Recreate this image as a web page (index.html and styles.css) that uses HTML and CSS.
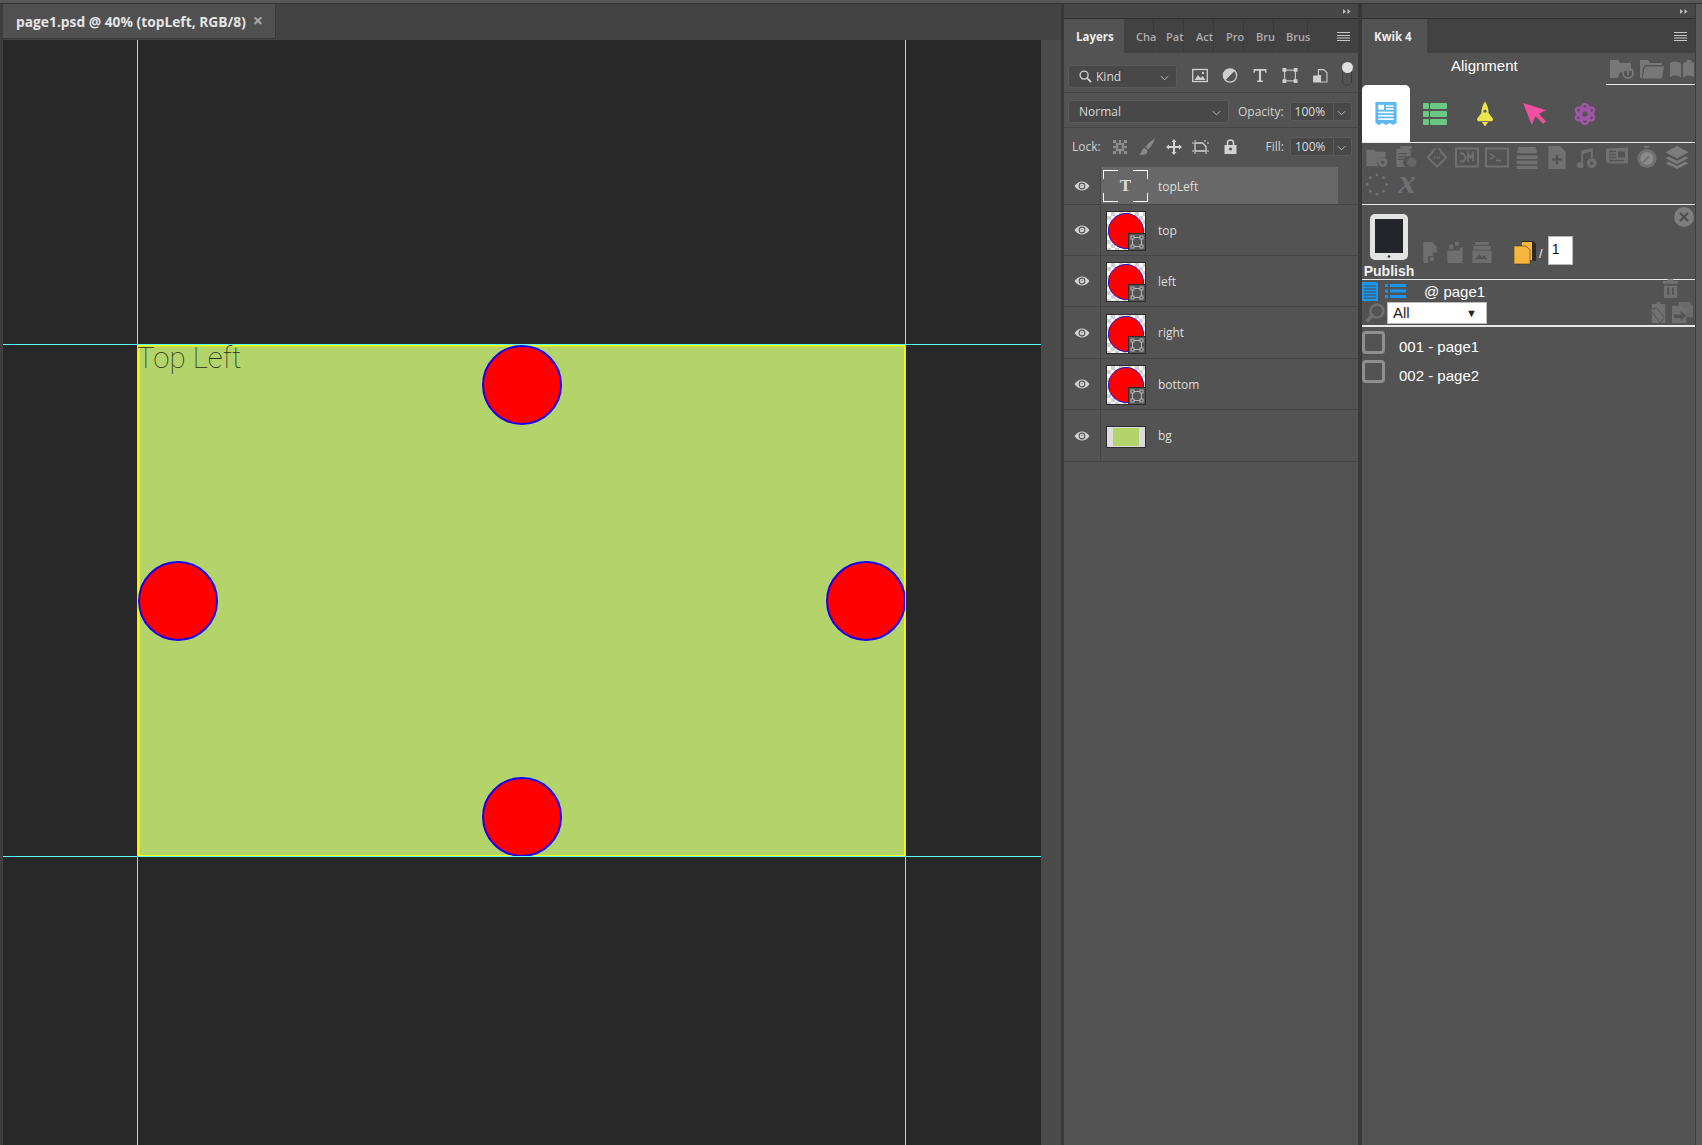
FILE: index.html
```html
<!DOCTYPE html>
<html lang="en">
<head>
<meta charset="utf-8">
<title>page1.psd</title>
<link rel="stylesheet" href="styles.css">
</head>
<body>
<svg class="defs" width="0" height="0" aria-hidden="true">
  <symbol id="eye" viewBox="0 0 16 10"><path d="M0.5 5C3 1.5 5.500 .4 8 .4s5 1.100 7.500 4.600C13 8.500 10.500 9.600 8 9.600S3 8.500 .5 5z" fill="#d4d4d4"/><circle cx="8" cy="5" r="3.400" fill="#535353"/><circle cx="8" cy="5" r="2.300" fill="#d4d4d4"/><circle cx="8" cy="4.600" r=".7" fill="#535353"/></symbol>
  <symbol id="smart" viewBox="0 0 18 18"><rect x=".5" y=".5" width="17" height="17" fill="#555" stroke="#2c2c2c"/><rect x="4.500" y="4.500" width="9" height="9" fill="none" stroke="#b5b5b5"/><g fill="#555" stroke="#b5b5b5"><rect x="3" y="3" width="3" height="3"/><rect x="12" y="3" width="3" height="3"/><rect x="3" y="12" width="3" height="3"/><rect x="12" y="12" width="3" height="3"/></g></symbol>
  <symbol id="chev" viewBox="0 0 10 6"><path d="M1 1l4 4 4-4" fill="none" stroke="#c4c4c4"/></symbol>
  <symbol id="burger" viewBox="0 0 13 9"><path d="M0 .5h13M0 3.500h13M0 6h13M0 8.500h13" stroke="#c8c8c8" stroke-width="1"/></symbol>
  <symbol id="collapse" viewBox="0 0 8 5"><path d="M0 0l3 2.500L0 5zM4.500 0l3 2.500-3 2.500z" fill="#bdbdbd"/></symbol>
</svg>
<div class="app">
  <div class="top-strip"></div>
  <div class="work">
    <div class="left-edge"></div>
    <main class="doc">
      <div class="doc-tabs">
        <div class="doc-tab"><span class="doc-title">page1.psd @ 40% (topLeft, RGB/8)</span><span class="doc-close">×</span></div>
      </div>
      <div class="doc-body">
        <div class="canvas">
          <div class="guide guide-v guide-v1"></div>
          <div class="guide guide-v guide-v2"></div>
          <div class="guide guide-h guide-h1"></div>
          <div class="guide guide-h guide-h2"></div>
          <div class="artboard">
            <div class="artboard-text">Top Left</div>
            <div class="dot dot-top"></div>
            <div class="dot dot-left"></div>
            <div class="dot dot-right"></div>
            <div class="dot dot-bottom"></div>
          </div>
        </div>
        <div class="doc-scroll"></div>
      </div>
    </main>
    <div class="divider"></div>

    <section class="dock dock-layers">
      <div class="collapse-bar"><svg class="collapse-icon"><use href="#collapse"/></svg></div>
      <div class="panel-tabs">
        <div class="ptab ptab-active">Layers</div>
        <div class="ptab">Cha</div>
        <div class="ptab">Pat</div>
        <div class="ptab">Act</div>
        <div class="ptab">Pro</div>
        <div class="ptab">Bru</div>
        <div class="ptab ptab-wide">Brus</div>
        <svg class="burger"><use href="#burger"/></svg>
      </div>
      <div class="l-row l-filter">
        <div class="select select-kind">
          <svg class="mag" viewBox="0 0 14 14"><circle cx="5.500" cy="5.500" r="4.300" fill="none" stroke="#d0d0d0" stroke-width="1.500"/><path d="M8.800 8.800l4.200 4.200" stroke="#d0d0d0" stroke-width="2"/></svg>
          <span>Kind</span><svg class="chev"><use href="#chev"/></svg>
        </div>
        <div class="filter-icons">
          <svg viewBox="0 0 16 14"><rect x=".7" y="1" width="14.600" height="12" fill="none" stroke="#cfcfcf" stroke-width="1.300"/><path d="M2.500 11.500l3.500-5 2.500 3 2-2 3 4z" fill="#cfcfcf"/><circle cx="11" cy="4.500" r="1.200" fill="#cfcfcf"/></svg>
          <svg viewBox="0 0 14 14"><circle cx="7" cy="7" r="6.200" fill="none" stroke="#cfcfcf" stroke-width="1.200"/><path d="M11.400 2.600A6.200 6.200 0 0 0 2.600 11.400z" fill="#cfcfcf"/></svg>
          <svg viewBox="0 0 14 14"><path d="M1 1h12v3.500h-1L11.500 2.500H8v9l1.800.7V13H4.200v-.8l1.800-.7v-9H2.500L2 4.500H1z" fill="#cfcfcf"/></svg>
          <svg viewBox="0 0 14 14"><rect x="2" y="2" width="10" height="10" fill="none" stroke="#cfcfcf"/><g fill="#cfcfcf"><rect x="0" y="0" width="3.500" height="3.500"/><rect x="10.500" y="0" width="3.500" height="3.500"/><rect x="0" y="10.500" width="3.500" height="3.500"/><rect x="10.500" y="10.500" width="3.500" height="3.500"/></g></svg>
          <svg viewBox="0 0 14 14"><path d="M5.500 1.500h5l3 3V13h-6V7H5.500z" fill="none" stroke="#cfcfcf"/><rect x=".5" y="7" width="7" height="6.500" fill="#cfcfcf"/></svg>
        </div>
        <div class="toggle"><i></i></div>
      </div>
      <div class="l-row l-blend">
        <div class="select select-blend"><span>Normal</span><svg class="chev"><use href="#chev"/></svg></div>
        <label class="l-label">Opacity:</label>
        <div class="field"><span>100%</span><i><svg class="chev"><use href="#chev"/></svg></i></div>
      </div>
      <div class="l-row l-lock">
        <label class="l-label lock-label">Lock:</label>
        <div class="lock-icons">
          <svg class="li-check" viewBox="0 0 14 14" shape-rendering="crispEdges"><rect width="14" height="14" fill="#8e8e8e"/><g fill="#5a5a5a"><rect x="3" y="0" width="3" height="3"/><rect x="8" y="0" width="3" height="3"/><rect x="0" y="3" width="3" height="3"/><rect x="5" y="5" width="4" height="4"/><rect x="11" y="3" width="3" height="3"/><rect x="0" y="8" width="3" height="3"/><rect x="11" y="8" width="3" height="3"/><rect x="3" y="11" width="3" height="3"/><rect x="8" y="11" width="3" height="3"/></g></svg>
          <svg class="li-brush" viewBox="0 0 16 17"><path d="M16 .5C12 3 8.500 6 6.500 9l2.500 2.500C12 9 14.500 5 16 .5z" fill="#8a8a8a"/><path d="M5.500 10C2.500 10.800 3.500 14.500 0 16.500c4 1 9.500 0 8-4.500z" fill="#8a8a8a"/></svg>
          <svg class="li-move" viewBox="0 0 16 16"><path d="M8 0l2.500 3H9v4h4V5.500L16 8l-3 2.500V9H9v4h1.500L8 16l-2.500-3H7V9H3v1.500L0 8l3-2.500V7h4V3H5.500z" fill="#d2d2d2"/></svg>
          <svg class="li-crop" viewBox="0 0 17 14"><path d="M3 3h7.500L14 6.500V11H3z" fill="none" stroke="#d2d2d2" stroke-width="1.300"/><path d="M0 3h2M3 0v2M13 0v2M15 3h2M0 11h2M3 12v2M14 12v2M15 11h2" stroke="#d2d2d2"/></svg>
          <svg class="li-lock" viewBox="0 0 12 15"><path d="M3 6V4a3 3 0 0 1 6 0v2" fill="none" stroke="#d2d2d2" stroke-width="1.500"/><path d="M0 6h12v9H0z" fill="#d2d2d2"/><circle cx="6" cy="10" r="1.500" fill="#535353"/></svg>
        </div>
        <label class="l-label fill-label">Fill:</label>
        <div class="field"><span>100%</span><i><svg class="chev"><use href="#chev"/></svg></i></div>
      </div>
      <ul class="layers">
        <li class="layer layer-first">
          <div class="eye-col"><svg class="eye"><use href="#eye"/></svg></div>
          <div class="layer-main layer-selected">
            <div class="thumb-text"><span>T</span></div>
            <span class="layer-name">topLeft</span>
          </div>
        </li>
        <li class="layer"><div class="eye-col"><svg class="eye"><use href="#eye"/></svg></div><div class="layer-main"><div class="thumb"><b></b><svg class="smart"><use href="#smart"/></svg></div><span class="layer-name">top</span></div></li>
        <li class="layer"><div class="eye-col"><svg class="eye"><use href="#eye"/></svg></div><div class="layer-main"><div class="thumb"><b></b><svg class="smart"><use href="#smart"/></svg></div><span class="layer-name">left</span></div></li>
        <li class="layer layer-tall"><div class="eye-col"><svg class="eye"><use href="#eye"/></svg></div><div class="layer-main"><div class="thumb"><b></b><svg class="smart"><use href="#smart"/></svg></div><span class="layer-name">right</span></div></li>
        <li class="layer"><div class="eye-col"><svg class="eye"><use href="#eye"/></svg></div><div class="layer-main"><div class="thumb"><b></b><svg class="smart"><use href="#smart"/></svg></div><span class="layer-name">bottom</span></div></li>
        <li class="layer layer-tall"><div class="eye-col"><svg class="eye"><use href="#eye"/></svg></div><div class="layer-main"><div class="thumb-bg"><i></i></div><span class="layer-name">bg</span></div></li>
      </ul>
    </section>
    <div class="divider divider-wide"></div>

    <section class="dock dock-kwik">
      <div class="collapse-bar"><svg class="collapse-icon"><use href="#collapse"/></svg></div>
      <div class="panel-tabs">
        <div class="ptab ptab-active ptab-kwik">Kwik 4</div>
        <svg class="burger"><use href="#burger"/></svg>
      </div>
      <div class="k-head">
        <div class="k-title">Alignment</div>
        <div class="k-folders">
          <svg viewBox="0 0 26 20"><path d="M1 1h8l2 3h11v8h-7a7 7 0 0 0-6 7H1z" fill="#777"/><circle cx="19" cy="14" r="5" fill="none" stroke="#777" stroke-width="2"/><path d="M19 12v4" stroke="#777" stroke-width="2"/></svg>
          <svg viewBox="0 0 26 20"><path d="M1 1h8l2 3h12v2H6L4 9 3 19H1z" fill="#777"/><path d="M6 7.500h19l-2 12H3.500z" fill="#777"/></svg>
          <svg viewBox="0 0 26 20"><path d="M1 4c4-2 8-2 11 1v14c-3-3-7-3-11-1zM14 5c3-3 7-3 11-1v14c-4-2-8-2-11 1z" fill="#777"/><path d="M18 1h4v8l-2-2-2 2z" fill="#777"/></svg>
        </div>
      </div>
      <div class="k-tabs">
        <div class="k-tab k-tab-on">
          <svg viewBox="0 0 24 26"><path d="M1 1h22v22l-3.600 2-3.800-2-3.600 2-3.600-2-3.800 2L1 23z" fill="#5cb8ee"/><g fill="#fff"><rect x="4" y="4" width="6" height="5"/><rect x="12" y="4.500" width="8" height="1.600"/><rect x="12" y="7.500" width="8" height="1.600"/><rect x="4" y="11" width="16" height="1.700"/><rect x="4" y="14.500" width="16" height="1.700"/><rect x="4" y="18" width="16" height="1.700"/></g></svg>
        </div>
        <div class="k-tab">
          <svg class="kt-grid" viewBox="0 0 24 22"><g fill="#6cc782"><rect width="6" height="6" rx="1"/><rect x="7" width="17" height="6" rx="1"/><rect y="8" width="6" height="6" rx="1"/><rect x="7" y="8" width="17" height="6" rx="1"/><rect y="16" width="6" height="6" rx="1"/><rect x="7" y="16" width="17" height="6" rx="1"/></g></svg>
        </div>
        <div class="k-tab">
          <svg class="kt-rocket" viewBox="0 0 20 28"><path d="M10 0c2.500 3.500 4 8 4 13l5 6.500-1 2.500H2l-1-2.500L6 13c0-5 1.500-9.500 4-13z" fill="#ebe44e"/><circle cx="10" cy="11" r="1.600" fill="#555"/><path d="M6.500 23h7L10 28z" fill="#ebe44e"/></svg>
        </div>
        <div class="k-tab">
          <svg class="kt-arrow" viewBox="0 0 26 24"><path d="M0 0l25 8-7.800 3.700L25 20l-3 3-8.400-8.500L9.500 24z" fill="#ef4f9f"/></svg>
        </div>
        <div class="k-tab">
          <svg class="kt-atom" viewBox="0 0 26 26" fill="none" stroke="#a055a6" stroke-width="2.600"><ellipse cx="13" cy="13" rx="5" ry="11"/><ellipse cx="13" cy="13" rx="5" ry="11" transform="rotate(60 13 13)"/><ellipse cx="13" cy="13" rx="5" ry="11" transform="rotate(-60 13 13)"/><circle cx="13" cy="13" r="3.500" stroke-width="1.500"/></svg>
        </div>
      </div>
      <div class="k-tools">
        <svg viewBox="0 0 24 24"><path d="M1 4h8l2 2h10v6h-5l-4 5 1 4H1z" fill="#707070"/><circle cx="18" cy="17" r="5" fill="#707070"/><circle cx="18" cy="17" r="1.800" fill="#535353"/></svg>
        <svg viewBox="0 0 24 24"><path d="M5 0h12v3H8v14H5z" fill="#707070"/><path d="M1 3h13l2 2v6a6 6 0 0 0-5 11H1z" fill="#707070"/><path d="M3 8h9M3 11h9M3 14h7" stroke="#535353" stroke-width="1.300"/><circle cx="17" cy="17" r="5" fill="#666"/></svg>
        <svg viewBox="0 0 26 24"><path d="M9 6l-6 6 6 6M17 6l6 6-6 6M11 2l-8 10 10 10 10-10L15 2" fill="none" stroke="#707070" stroke-width="2"/><path d="M9.500 12h1.500M12.500 12h1.500M15 12h1.500" stroke="#707070" stroke-width="2"/></svg>
        <svg viewBox="0 0 24 20"><rect x="1" y="1" width="22" height="18" fill="none" stroke="#707070" stroke-width="2"/><path d="M5 6h3l3 4-3 4H5M13 14V6l2.500 4L18 6v8" fill="none" stroke="#707070" stroke-width="1.800"/></svg>
        <svg viewBox="0 0 24 20"><rect x="1" y="1" width="22" height="18" fill="none" stroke="#707070" stroke-width="2"/><path d="M5 6l4 3-4 3M11 13h5" fill="none" stroke="#707070" stroke-width="1.500"/></svg>
        <svg viewBox="0 0 22 22"><path d="M3 1h16l2 6H1z" fill="#707070"/><rect x="1" y="9" width="20" height="3.500" fill="#707070"/><rect x="1" y="14" width="20" height="3.500" fill="#707070"/><rect x="1" y="19" width="20" height="3" fill="#707070"/></svg>
        <svg viewBox="0 0 20 24"><path d="M1 0h12l6 6v18H1z" fill="#707070"/><path d="M10 9v10M5 14h10" stroke="#535353" stroke-width="2.400"/></svg>
        <svg viewBox="0 0 22 24"><path d="M5 5l12-3v14h-2V6L7 8v12H5z" fill="#707070"/><ellipse cx="4" cy="20" rx="3.500" ry="3" fill="#707070"/><circle cx="16" cy="18" r="5" fill="#707070"/><path d="M14.500 15.500l4 2.500-4 2.500z" fill="#535353"/></svg>
        <svg viewBox="0 0 24 22"><path d="M1 2l22-1v16H5a4 4 0 0 1-4-4z" fill="#707070"/><rect x="13" y="5" width="7" height="6" fill="#535353"/><path d="M4 5h7M4 8h7M4 11h7M4 14h15" stroke="#535353" stroke-width="1.300"/></svg>
        <svg viewBox="0 0 22 24"><path d="M8 0h6v2H8z" fill="#707070"/><circle cx="11" cy="13" r="10" fill="#707070"/><circle cx="11" cy="13" r="6.800" fill="#8a8a8a"/><path d="M7 17l6-6" stroke="#707070" stroke-width="2"/></svg>
        <svg viewBox="0 0 22 22"><path d="M11 0l11 6-11 6L0 6z" fill="#7c7c7c"/><path d="M3 10l8 4 8-4 3 1.500-11 6-11-6zM3 15l8 4 8-4 3 1.500-11 5.500-11-5.500z" fill="#7c7c7c"/></svg>
        <svg viewBox="0 0 24 24"><g fill="#707070"><circle cx="12" cy="2" r="1.500"/><circle cx="19" cy="5" r="1.500"/><circle cx="22" cy="12" r="1.500"/><circle cx="19" cy="19" r="1.500"/><circle cx="12" cy="22" r="1.500"/><circle cx="5" cy="19" r="1.500"/><circle cx="2" cy="12" r="1.500"/><circle cx="5" cy="5" r="1.500"/></g></svg>
        <span class="k-x">x</span>
      </div>
      <div class="k-publish">
        <div class="pub">
          <svg class="tablet" viewBox="0 0 40 48"><rect x="1" y="1" width="38" height="46" rx="5" fill="#e3e3e3"/><rect x="6" y="6" width="28" height="34" fill="#24252b"/><circle cx="20" cy="43.500" r="1.300" fill="#333"/></svg>
          <span class="pub-label">Publish</span>
        </div>
        <div class="pub-icons">
          <svg viewBox="0 0 16 22"><path d="M1 0h9l5 5v6h-4v4H6v7H1z" fill="#6e6e6e"/><rect x="8" y="16" width="4" height="4" fill="#6e6e6e"/></svg>
          <svg viewBox="0 0 16 22"><path d="M8 0h4v4H8zM2 3h4v4H2zM13 6h3v4h-3zM0 9h16v13H0z" fill="#6e6e6e"/></svg>
          <svg viewBox="0 0 20 22"><path d="M3 0h14v3H3zM1 4h18v4H1z" fill="#6e6e6e"/><path d="M0 9h20v13H0z" fill="#6e6e6e"/><path d="M3 18l4-5 3 3 2-2 4 4z" fill="#535353"/></svg>
        </div>
        <div class="pub-count">
          <svg class="pages" viewBox="0 0 22 24"><path d="M7 0h12l3 3v17h-3z" fill="#2e2a20"/><path d="M8 1h10v18H8z" fill="#f6b740"/><path d="M0 5h12l4 4v14H0z" fill="#f6b740" stroke="#4a3a18" stroke-width=".6"/></svg>
          <span class="slash">/</span>
          <span class="count-box">1</span>
        </div>
        <div class="pub-close"><svg viewBox="0 0 10 10"><path d="M1 1l8 8M9 1l-8 8" stroke="#4c4c4c" stroke-width="2"/></svg></div>
      </div>
      <div class="k-pages">
        <div class="pg-line">
          <svg class="pg-doc" viewBox="0 0 16 20"><path d="M0 1h14l2 1v18H0z" fill="#1b96ee"/><path d="M2 5h12M2 8h12M2 11h12M2 14h12M2 17h12" stroke="#4a4a4a"/></svg>
          <svg class="pg-list" viewBox="0 0 21 14"><g fill="#1b96ee"><rect width="3" height="3"/><rect x="5" width="16" height="3"/><rect y="5.500" width="3" height="3"/><rect x="5" y="5.500" width="16" height="3"/><rect y="11" width="3" height="3"/><rect x="5" y="11" width="16" height="3"/></g></svg>
          <span class="pg-name">@ page1</span>
          <svg class="pg-trash" viewBox="0 0 16 20"><path d="M5 0h6v2h5v3H0V2h5z" fill="#707070"/><path d="M1 7h14v13H1z" fill="#707070"/><path d="M5.500 9v8M10.500 9v8" stroke="#535353" stroke-width="2"/></svg>
        </div>
        <div class="pg-line pg-filter">
          <svg class="pg-search" viewBox="0 0 20 20"><circle cx="12" cy="8" r="6.500" fill="none" stroke="#6f6f6f" stroke-width="2.500"/><path d="M7 13l-5.500 5.500" stroke="#6f6f6f" stroke-width="3.500"/></svg>
          <div class="pg-select"><span>All</span><i>▼</i></div>
          <svg class="pg-act pg-act1" viewBox="0 0 20 22"><path d="M3 2h5V0h4v2h5v20H3z" fill="#707070"/><path d="M1 8l7-2 8 10-4 6z" fill="#707070" stroke="#535353"/></svg>
          <svg class="pg-act" viewBox="0 0 22 22"><path d="M7 0h11l4 4v12H7z" fill="#6a6a6a"/><path d="M0 4h11l4 4v14H0z" fill="#707070"/><path d="M2 13h7V9l6 5.500-6 5.500v-3H2z" fill="#535353"/></svg>
        </div>
      </div>
      <ul class="pg-items">
        <li class="pg-item"><i class="check"></i><span>001 - page1</span></li>
        <li class="pg-item"><i class="check"></i><span>002 - page2</span></li>
      </ul>
    </section>
    <div class="right-edge"></div>
  </div>
</div>
</body>
</html>
```
FILE: styles.css
```css
* { box-sizing: border-box; }
html, body { margin: 0; padding: 0; }
body { background: #535353; overflow: hidden; font-family: "Open Sans", "Noto Sans", sans-serif; }
.defs { position: absolute; }
ul { list-style: none; margin: 0; padding: 0; }
.app { width: 1702px; height: 1145px; display: flex; flex-direction: column; overflow: hidden; }
.top-strip { height: 4px; flex: none; background: #585858; border-bottom: 1px solid #333; }
.work { flex: 1; display: flex; min-height: 0; }
.left-edge { width: 3px; flex: none; background: #3e3e3e; }
.doc { width: 1058px; flex: none; display: flex; flex-direction: column; }
.doc-tabs { height: 36px; flex: none; background: #434343; display: flex; }
.doc-tab { width: 273px; height: 35px; background: #505050; border-right: 1px solid #3a3a3a; border-bottom: 1px solid #3a3a3a; padding: 1px 0 0 13px; display: flex; align-items: center; gap: 7px; }
.doc-title { color: #e4e4e4; font-size: 13.800px; font-weight: 700; white-space: nowrap; }
.doc-close { color: #a8a8a8; font-size: 18px; font-weight: 700; line-height: 14px; margin-top: -4px; }
.doc-body { flex: 1; display: flex; min-height: 0; }
.canvas { width: 1038px; flex: none; background: #282828; position: relative; overflow: hidden; }
.doc-scroll { flex: 1; background: #4a4a4a; }
.divider { width: 3px; flex: none; background: #393939; }
.divider-wide { width: 4px; }
.guide { position: absolute; background: #55ffff; z-index: 3; }
.guide-v { top: 0; bottom: 0; width: 1px; }
.guide-h { left: 0; right: 0; height: 1px; }
.guide-v1 { left: 134px; }
.guide-v2 { left: 902px; }
.guide-h1 { top: 304px; }
.guide-h2 { top: 816px; }
.artboard { position: absolute; left: 135px; top: 305px; width: 767px; height: 511px; background: #b3d46a; box-shadow: inset 0 0 0 1px #ffff00, inset 1px 1px 0 1px rgba(255, 255, 0, .45); }
.artboard-text { position: absolute; left: -1px; top: -7px; font-family: Roboto, sans-serif; font-weight: 100; font-size: 29.500px; line-height: 40px; color: #26301a; white-space: nowrap; }
.dot { position: absolute; width: 80px; height: 80px; border-radius: 50%; background: #ff0000; border: 2px solid #1400f5; }
.dot-top { left: 344px; top: 0; }
.dot-left { left: 0; top: 216px; }
.dot-right { left: 688px; top: 216px; }
.dot-bottom { left: 344px; top: 432px; }

.dock { flex: none; display: flex; flex-direction: column; background: #535353; }
.dock-layers { width: 294px; }
.dock-kwik { width: 333px; }
.right-edge { flex: 1; background: #5a5a5a; border-left: 1px solid #3d3d3d; }
.collapse-bar { height: 15px; flex: none; background: #474747; border-bottom: 1px solid #2f2f2f; display: flex; justify-content: flex-end; align-items: center; padding-right: 7px; }
.collapse-icon { width: 8px; height: 5px; }
.panel-tabs { height: 34px; flex: none; background: #424242; display: flex; position: relative; }
.ptab { width: 30px; border-right: 1px solid #3a3a3a; padding-left: 12px; color: #adadad; font-size: 11px; font-weight: 600; line-height: 35px; white-space: nowrap; }
.ptab-wide { width: 34px; }
.ptab-active { width: 60px; background: #535353; color: #ececec; border-right: 0; font-size: 11.500px; font-weight: 700; }
.ptab-kwik { width: 65px; }
.burger { position: absolute; right: 8px; top: 13px; width: 13px; height: 9px; }

.l-row { display: flex; align-items: center; border-bottom: 1px solid #454545; flex: none; padding-left: 4px; color: #d4d4d4; font-size: 12px; }
.l-filter { height: 40px; padding-top: 8px; }
.l-blend { height: 35px; padding-top: 2px; }
.l-lock { height: 39px; border-bottom: 0; padding-bottom: 2px; }
.select { height: 23px; background: #484848; border: 1px solid #5b5b5b; border-radius: 3px; display: flex; align-items: center; color: #d8d8d8; position: relative; }
.select-kind { width: 109px; padding-left: 10px; gap: 4px; }
.select-blend { width: 161px; padding-left: 10px; }
.mag { width: 13px; height: 13px; }
.chev { width: 9px; height: 6px; position: absolute; right: 7px; top: 9px; }
.filter-icons { display: flex; margin-left: 8px; margin-top: -2px; }
.filter-icons svg { width: 16px; height: 15px; margin: 0 7px; }
.toggle { width: 10px; height: 20px; border: 1px solid #3c3c3c; border-radius: 6px; margin-left: 7px; position: relative; margin-top: -2px; }
.toggle i { position: absolute; width: 11px; height: 11px; border-radius: 50%; background: #e0e0e0; left: -1.500px; top: -5px; }
.l-label { color: #d0d0d0; font-size: 12px; margin-left: 9px; }
.field { width: 62px; height: 19px; background: #484848; border: 1px solid #5b5b5b; border-radius: 2px; margin: 0 6px; display: flex; color: #dcdcdc; font-size: 12px; line-height: 17px; flex: none; }
.field span { width: 43px; padding-left: 4px; border-right: 1px solid #5b5b5b; }
.field i { flex: 1; position: relative; }
.field .chev { right: 5px; top: 7px; }
.lock-label { margin-left: 4px; width: 28px; }
.lock-icons { display: grid; grid-template-columns: repeat(5, 27px); margin-left: 6px; align-items: center; justify-items: center; }
.li-check { width: 14px; height: 14px; }
.li-brush { width: 16px; height: 17px; }
.li-move { width: 16px; height: 16px; }
.li-crop { width: 17px; height: 14px; }
.li-lock { width: 13px; height: 15px; margin-left: 5px; }
.fill-label { margin-left: auto; }
.layers { display: flex; flex-direction: column; }
.layer { height: 51px; display: flex; border-bottom: 1px solid #454545; }
.layer-first { height: 38px; }
.layer-tall { height: 52px; }
.eye-col { width: 37px; flex: none; display: flex; align-items: center; justify-content: center; border-right: 1px solid #454545; }
.eye { width: 16px; height: 10px; }
.layer-main { width: 237px; display: flex; align-items: center; padding: 2px 0 0 5px; }
.layer-selected { background: #686868; padding: 0 0 0 2px; height: 37px; }
.layer-name { color: #dedede; font-size: 12px; margin: -2px 0 0 12px; }
.layer-selected .layer-name { margin: 0 0 0 10px; padding-top: 1px; }
.thumb { width: 40px; height: 40px; flex: none; border: 1px solid #2c2c2c; position: relative; background: repeating-conic-gradient(#cfcfcf 0 25%, #fff 0 50%) 0 0 / 8px 8px; }
.thumb b { position: absolute; left: 1px; top: 1px; width: 36px; height: 36px; border-radius: 50%; background: #ff0000; border: 1px solid #2010d0; }
.smart { position: absolute; right: -1px; bottom: -1px; width: 18px; height: 18px; }
.thumb-bg { width: 40px; height: 22px; flex: none; background: #dcdcdc; border: 1px solid #2c2c2c; display: flex; justify-content: center; align-items: center; }
.thumb-bg i { width: 26px; height: 18px; background: #b3d46a; }
.thumb-text { width: 45px; height: 32px; flex: none; display: flex; align-items: center; justify-content: center; color: #dcdcdc; font-family: "Liberation Serif", serif; font-weight: 700; font-size: 17px; background:
  linear-gradient(#fff,#fff) 0 0/15px 1px no-repeat, linear-gradient(#fff,#fff) 100% 0/15px 1px no-repeat,
  linear-gradient(#fff,#fff) 0 100%/15px 1px no-repeat, linear-gradient(#fff,#fff) 100% 100%/15px 1px no-repeat,
  linear-gradient(#fff,#fff) 0 0/1px 9px no-repeat, linear-gradient(#fff,#fff) 100% 0/1px 9px no-repeat,
  linear-gradient(#fff,#fff) 0 100%/1px 9px no-repeat, linear-gradient(#fff,#fff) 100% 100%/1px 9px no-repeat; }

.k-head { height: 32px; flex: none; display: flex; }
.k-title { margin-left: 89px; color: #fff; font-family: "Liberation Sans", sans-serif; font-size: 15px; line-height: 16px; padding-top: 5px; }
.k-folders { margin-left: auto; width: 89px; border-bottom: 1px solid #e8e8e8; display: flex; gap: 4px; padding: 6px 0 0 3px; height: 32px; }
.k-folders svg { width: 26px; height: 20px; }
.k-tabs { height: 58px; flex: none; display: flex; border-bottom: 1px solid #e8e8e8; }
.k-tab { width: 50px; flex: none; display: flex; align-items: center; justify-content: center; }
.k-tab svg { width: 24px; height: 25px; }
.k-tab .kt-grid { width: 24px; height: 22px; }
.k-tab .kt-rocket { width: 18px; height: 28px; }
.k-tab .kt-arrow { width: 24px; height: 22px; }
.k-tab .kt-atom { width: 24px; height: 24px; }
.k-tab-on { width: 48px; background: #fff; border-radius: 5px 5px 0 0; }
.k-tools { height: 62px; flex: none; display: grid; grid-template-columns: repeat(11, 30px); grid-auto-rows: 27px; justify-items: center; align-items: center; padding-top: 1px; border-bottom: 1px solid #e8e8e8; align-content: start; }
.k-tools svg { width: 24px; height: 23px; }
.k-x { color: #707070; font-family: "Liberation Serif", serif; font-weight: 700; font-style: italic; font-size: 34px; line-height: 24px; margin-top: -6px; }
.k-publish { height: 75px; flex: none; display: flex; border-bottom: 1px solid #e8e8e8; position: relative; }
.pub { width: 48px; margin-left: 3px; display: flex; flex-direction: column; align-items: center; }
.tablet { width: 40px; height: 48px; margin-top: 8px; }
.pub-label { color: #f0f0f0; font-family: "Liberation Sans", sans-serif; font-weight: 700; font-size: 14px; line-height: 15px; margin-top: 3px; white-space: nowrap; }
.pub-icons { display: flex; gap: 9px; margin: 37px 0 0 9px; }
.pub-icons svg { width: 16px; height: 21px; }
.pub-icons svg:last-child { width: 20px; }
.pub-count { display: flex; align-items: flex-start; margin: 31px 0 0 22px; }
.pages { width: 22px; height: 24px; margin-top: 5px; }
.slash { color: #f0f0f0; font-family: "Liberation Sans", sans-serif; font-size: 13px; margin: 10px 5px 0 3px; }
.count-box { width: 25px; height: 29px; background: #fff; border: 1px solid #b8b8b8; color: #111; font-family: "Liberation Sans", sans-serif; font-size: 14px; line-height: 24px; padding-left: 3px; }
.pub-close { position: absolute; right: 1px; top: 2px; width: 20px; height: 20px; border-radius: 50%; background: #7d7d7d; display: flex; align-items: center; justify-content: center; }
.pub-close svg { width: 10px; height: 10px; }
.k-pages { height: 47px; flex: none; border-bottom: 2px solid #e8e8e8; position: relative; }
.pg-line { height: 22px; display: flex; align-items: center; position: relative; }
.pg-doc { width: 16px; height: 20px; }
.pg-list { width: 21px; height: 14px; margin-left: 7px; }
.pg-name { color: #fff; font-family: "Liberation Sans", sans-serif; font-size: 15px; margin-left: 18px; }
.pg-trash { width: 15px; height: 19px; margin-left: auto; margin-right: 17px; margin-top: -5px; }
.pg-filter { height: 21px; }
.pg-search { width: 20px; height: 20px; margin-left: 3px; }
.pg-select { width: 100px; height: 22px; background: #fff; border: 1px solid #bbb; margin-left: 2px; display: flex; align-items: center; justify-content: space-between; padding: 0 9px 0 5px; color: #222; font-family: "Liberation Sans", sans-serif; font-size: 15px; }
.pg-select i { font-style: normal; font-size: 11px; color: #222; }
.pg-act { width: 21px; height: 21px; margin-right: 2px; }
.pg-act1 { margin-left: auto; margin-right: 3px; }
.pg-items { padding-top: 1px; }
.pg-item { height: 29px; display: flex; align-items: center; color: #fff; font-family: "Liberation Sans", sans-serif; font-size: 15px; }
.pg-item span { margin-left: 14px; padding-top: 8px; }
.check { width: 23px; height: 23px; flex: none; border: 3px solid #8f8f8f; border-radius: 4px; }
```
